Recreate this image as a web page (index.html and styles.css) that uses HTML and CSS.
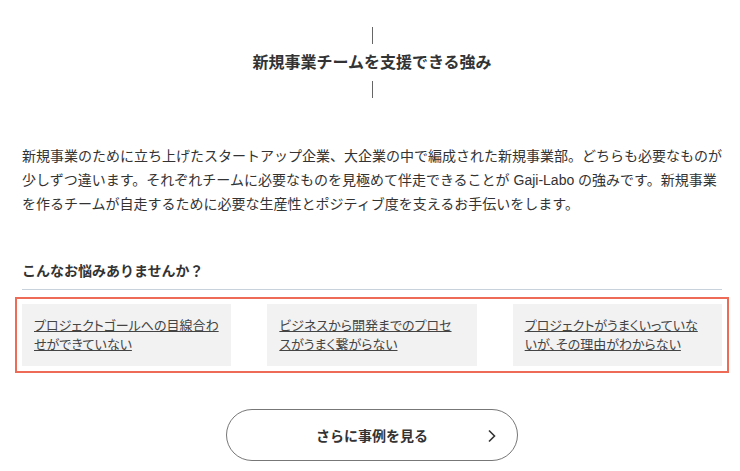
FILE: index.html
```html
<!DOCTYPE html>
<html lang="ja">
<head>
    <meta charset="UTF-8">
    <meta name="viewport" content="width=device-width, initial-scale=1.0">
    <title>強み</title>
    <link rel="stylesheet" href="styles.css">
</head>
<body>
    <!-- Section: strengths -->
    <section class="strength">
        <div class="section-head">
            <span class="head-line"></span>
            <h2>新規事業チームを支援できる強み</h2>
            <span class="head-line"></span>
        </div>

        <p class="lead">新規事業のために立ち上げたスタートアップ企業、大企業の中で編成された新規事業部。どちらも必要なものが少しずつ違います。それぞれチームに必要なものを見極めて伴走できることが Gaji-Labo の強みです。新規事業を作るチームが自走するために必要な生産性とポジティブ度を支えるお手伝いをします。</p>

        <h3 class="worry-title">こんなお悩みありませんか？</h3>

        <ul class="worries">
            <li class="worry"><a href="#">プロジェクトゴールへの目線合わ<br>せができていない</a></li>
            <li class="worry"><a href="#">ビジネスから開発までのプロセ<br>スがうまく繋がらない</a></li>
            <li class="worry"><a href="#">プロジェクトがうまくいっていな<br>いが、その理由がわからない</a></li>
        </ul>

        <div class="more">
            <a class="more-button" href="#">
                さらに事例を見る
                <svg class="chevron" width="10" height="14" viewBox="0 0 10 14" aria-hidden="true">
                    <path d="M2 1.5 L7.5 7 L2 12.5" fill="none" stroke="#333" stroke-width="1.6"/>
                </svg>
            </a>
        </div>
    </section>
</body>
</html>
```

FILE: styles.css
```css
/* base */
body {
    margin: 0;
    font-family: "Helvetica Neue", Arial, "Liberation Sans", "Noto Sans CJK JP", sans-serif;
    color: #333;
    background-color: #fff;
}

.strength {
    width: 700px;
    margin-left: 22px;
    padding-top: 27px;
}

/* title with lines above and below */
.section-head {
    display: flex;
    flex-direction: column;
    align-items: center;
}

.head-line {
    display: block;
    width: 1px;
    height: 17px;
    background-color: #666;
}

.section-head h2 {
    margin: 7px 0 6px;
    font-size: 16px;
    line-height: 24px;
    font-weight: bold;
    color: #333;
}

.lead {
    margin: 46px 0 0;
    font-size: 14px;
    line-height: 24px;
}

.worry-title {
    margin: 43px 0 0;
    padding-bottom: 6px;
    font-size: 14px;
    line-height: 24px;
    font-weight: bold;
    border-bottom: 1px solid #c8d2dc;
}

/* problem cards */
.worries {
    display: grid;
    grid-template-columns: repeat(3, 1fr);
    gap: 36px;
    margin: 14px 0 0;
    padding: 0;
    list-style: none;
    outline: 2px solid #ee6b57;
    outline-offset: 5px;
}

.worry {
    background-color: #f2f2f2;
    padding: 12px 10px 12px 12px;
    font-size: 13px;
    line-height: 19px;
    font-feature-settings: "palt";
}

.worry a {
    color: #444;
    text-decoration: underline;
}

/* more button */
.more {
    display: flex;
    justify-content: center;
    margin-top: 43px;
}

.more-button {
    position: relative;
    display: flex;
    justify-content: center;
    align-items: center;
    width: 290px;
    height: 50px;
    border: 1px solid #777;
    border-radius: 26px;
    color: #333;
    font-size: 14px;
    font-weight: bold;
    text-decoration: none;
}

.chevron {
    position: absolute;
    right: 20px;
    top: 19px;
}
```
